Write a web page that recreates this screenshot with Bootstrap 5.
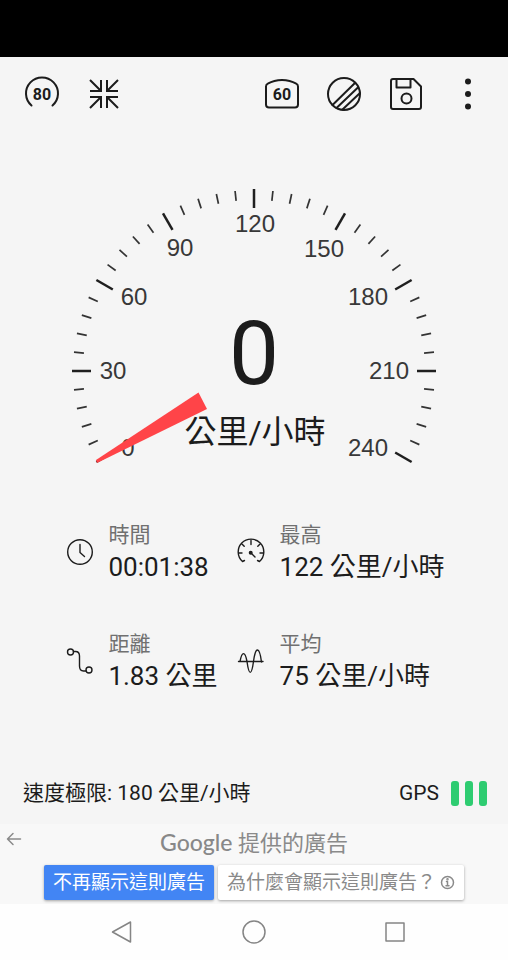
<!DOCTYPE html>
<html lang="zh-Hant">
<head>
<meta charset="utf-8">
<meta name="viewport" content="width=device-width, initial-scale=1">
<title>GPS 速度表</title>
<link href="https://cdn.jsdelivr.net/npm/bootstrap@5.3.0/dist/css/bootstrap.min.css" rel="stylesheet">
<style>
  body { background: #f5f5f5; color: #1c1c1c; font-family: Roboto, "Noto Sans CJK TC", sans-serif; }
  svg { display: block; }
  .status-strip { height: 57px; background: #000; }
  .toolbar { height: 73px; padding: 0 9px 0 11px; }
  .tool-btn { width: 62px; height: 62px; color: #1c1c1c; }
  .ico { fill: none; stroke: currentColor; stroke-width: 2; stroke-linecap: round; stroke-linejoin: round; }
  .ico-sharp { stroke-linecap: butt; stroke-linejoin: miter; }
  .ico-thin { stroke-width: 1.5; }
  .ico text { fill: currentColor; stroke: none; font-weight: 700; font-size: 16px; text-anchor: middle; }
  .dial { max-height: 350px; }
  .dial-num { font-family: "Liberation Sans", Arial, sans-serif; font-size: 24px; fill: #383838; text-anchor: middle; }
  .speed { font-size: 89px; text-anchor: middle; fill: #1c1c1c; }
  .unit { font-size: 32px; text-anchor: middle; fill: #1c1c1c; }
  .stats { display: grid; grid-template-columns: auto auto; justify-content: center; gap: 45px 19px; padding: 40px 0 0 2px; }
  .stat { gap: 15px; }
  .stat .ico { stroke-width: 1.4; }
  .stat dt { font-size: 21px; line-height: 30px; font-weight: 400; color: #707070; }
  .stat dd { font-size: 26px; line-height: 34px; }
  .limit-row { padding: 17px 21px 15px 23px; font-size: 21px; line-height: 32px; }
  .signal { gap: 6px; }
  .signal i { width: 8px; height: 25px; border-radius: 3px; background: #2ecc71; }
  .ad { background: #f8f8f8; height: 80px; padding-top: 3px; color: #8a8a8a; }
  .ad-back { width: 27px; height: 24px; color: #8a8a8a; }
  .ad-title { font-size: 22px; line-height: 30px; }
  .ad-brand { font-family: Lato, sans-serif; font-size: 23px; font-weight: 500; color: #888; }
  .ad-actions { gap: 4px; padding-top: 6px; }
  .ad-btn { height: 35px; padding: 0 9px; font-size: 19px; line-height: 35px; border: 0; border-radius: 2px; box-shadow: 0 1px 3px rgba(0,0,0,.35); white-space: nowrap; }
  .ad-hide { background: #4285f4; color: #fff; }
  .ad-why { background: #fff; color: #8a8a8a; }
  .sysnav { height: 56px; background: #fefefe; gap: 89px; }
  .sysnav .btn { width: 48px; height: 48px; color: #858585; }
</style>
<script src="https://cdn.jsdelivr.net/npm/bootstrap@5.3.0/dist/js/bootstrap.bundle.min.js"></script>
</head>
<body>
<div class="d-flex flex-column min-vh-100">
  <div class="status-strip"></div>

  <header class="toolbar d-flex align-items-center">
    <button type="button" class="tool-btn btn p-0 border-0 d-flex align-items-center justify-content-center" aria-label="速限 80">
      <svg class="ico" width="36" height="36" viewBox="0 0 36 36"><path d="M7.500 29.500A16 16 0 1 1 28.500 29.500"/><text x="18" y="23.500">80</text></svg>
    </button>
    <button type="button" class="tool-btn btn p-0 border-0 d-flex align-items-center justify-content-center" aria-label="縮小">
      <svg class="ico ico-sharp" width="36" height="36" viewBox="0 0 36 36"><path d="M4 15h11V4M15 15 4 4M32 15H21V4M21 15 32 4M4 21h11v11M15 21 4 32M32 21H21v11M21 21l11 11"/></svg>
    </button>
    <button type="button" class="tool-btn btn p-0 border-0 d-flex align-items-center justify-content-center ms-auto" aria-label="速限 60">
      <svg class="ico" width="36" height="36" viewBox="0 0 36 36"><path d="M2 10.500Q2 8.500 3.800 7.700 10 4 18 4t14.200 3.700Q34 8.500 34 10.500V28.500Q34 31.500 31 31.500H5Q2 31.500 2 28.500Z"/><text x="18" y="24">60</text></svg>
    </button>
    <button type="button" class="tool-btn btn p-0 border-0 d-flex align-items-center justify-content-center" aria-label="主題">
      <svg class="ico" width="36" height="36" viewBox="0 0 36 36"><circle cx="18" cy="18" r="16"/><path d="M6.500 29 29.200 6.800M10.500 32 32.200 11.200M16.500 33.500 34 17"/></svg>
    </button>
    <button type="button" class="tool-btn btn p-0 border-0 d-flex align-items-center justify-content-center" aria-label="儲存">
      <svg class="ico" width="36" height="36" viewBox="0 0 36 36"><path d="M5 3H25.500L33 10.500V31Q33 33 31 33H5Q3 33 3 31V5Q3 3 5 3ZM8.500 3v8.500h14V3"/><circle cx="18.500" cy="22.500" r="5"/></svg>
    </button>
    <button type="button" class="tool-btn btn p-0 border-0 d-flex align-items-center justify-content-center" aria-label="更多">
      <svg width="36" height="36" viewBox="0 0 36 36" fill="currentColor"><circle cx="18" cy="5.500" r="3"/><circle cx="18" cy="18" r="3"/><circle cx="18" cy="30.500" r="3"/></svg>
    </button>
  </header>

  <main>
    <svg class="dial w-100" viewBox="-254 -241 508 350" role="img" aria-label="時速 0 公里">
      <defs>
        <path id="major" d="M0-182v19" stroke="#1f1f1f" stroke-width="2.500"/>
        <g id="sector">
          <use href="#major"/>
          <g stroke="#333" stroke-width="1.700">
            <path d="M0-181v10" transform="rotate(6)"/>
            <path d="M0-181v10" transform="rotate(12)"/>
            <path d="M0-181v10" transform="rotate(18)"/>
            <path d="M0-181v10" transform="rotate(24)"/>
          </g>
        </g>
      </defs>
      <use href="#sector" transform="rotate(-120)"/>
      <use href="#sector" transform="rotate(-90)"/>
      <use href="#sector" transform="rotate(-60)"/>
      <use href="#sector" transform="rotate(-30)"/>
      <use href="#sector"/>
      <use href="#sector" transform="rotate(30)"/>
      <use href="#sector" transform="rotate(60)"/>
      <use href="#sector" transform="rotate(90)"/>
      <use href="#major" transform="rotate(120)"/>
      <g class="dial-num">
        <text x="-126" y="85">0</text>
        <text x="-141" y="8">30</text>
        <text x="-120" y="-66">60</text>
        <text x="-74" y="-115">90</text>
        <text x="1" y="-139">120</text>
        <text x="70" y="-114">150</text>
        <text x="114" y="-66">180</text>
        <text x="135" y="8">210</text>
        <text x="114" y="85">240</text>
      </g>
      <text class="speed" x="0" y="13">0</text>
      <text class="unit" x="1" y="72">公里/小時</text>
      <path d="M-158 89-55.500 21.500-47 38-157 92Z" fill="#ff4448"/>
    </svg>

    <dl class="stats mb-0">
      <div class="stat d-flex align-items-center">
        <svg class="ico" width="28" height="28" viewBox="0 0 28 28"><circle cx="15" cy="14" r="12.300"/><path d="M15 6.500V14.500l4.500 4"/></svg>
        <div><dt>時間</dt><dd class="mb-0">00:01:38</dd></div>
      </div>
      <div class="stat d-flex align-items-center">
        <svg class="ico" width="28" height="28" viewBox="0 0 28 28"><path d="M7.500 22.500 5.500 23.500A12.800 12.800 0 1 1 22.500 23.500L20.500 22.500M14 2.500v4M1.500 15h3.500M26.500 15h-3.500M5.200 6.200l2 2M22.800 6.200l-2 2M14 15l4 4"/><circle cx="13.700" cy="14.700" r="1.300" fill="currentColor"/></svg>
        <div><dt>最高</dt><dd class="mb-0">122 公里/小時</dd></div>
      </div>
      <div class="stat d-flex align-items-center">
        <svg class="ico" width="28" height="28" viewBox="0 0 28 28"><circle cx="5.500" cy="5" r="3"/><circle cx="24" cy="23" r="3"/><path d="M8.500 4.500h2Q14.500 4.500 14.500 9V19Q14.500 24 18.500 24h2.500"/></svg>
        <div><dt>距離</dt><dd class="mb-0">1.83 公里</dd></div>
      </div>
      <div class="stat d-flex align-items-center">
        <svg class="ico" width="28" height="28" viewBox="0 0 28 28"><path d="M1.500 14.500h24.500M3 14.500C5 4 8 4 10 14.500 12 29 14.500 29 16.500 14.500 18.500-1 22.500-1 24.500 15"/></svg>
        <div><dt>平均</dt><dd class="mb-0">75 公里/小時</dd></div>
      </div>
    </dl>
  </main>

  <section class="limit-row d-flex align-items-center justify-content-between mt-auto">
    <span>速度極限: 180 公里/小時</span>
    <span class="d-flex align-items-center">
      <span class="me-2 pe-1">GPS</span>
      <span class="signal d-flex"><i></i><i></i><i></i></span>
    </span>
  </section>

  <section class="ad">
    <div class="d-flex">
      <button type="button" class="ad-back btn p-0 border-0 d-flex align-items-center justify-content-center" aria-label="返回">
        <svg class="ico ico-thin" width="16" height="16" viewBox="0 0 16 16"><path d="M14.500 8H1.500M7 2.500 1.500 8 7 13.500"/></svg>
      </button>
      <div class="ad-title flex-fill text-center"><span class="ad-brand">Google</span> 提供的廣告</div>
      <span class="ad-back"></span>
    </div>
    <div class="ad-actions d-flex justify-content-center">
      <button type="button" class="ad-btn ad-hide">不再顯示這則廣告</button>
      <button type="button" class="ad-btn ad-why d-flex align-items-center">為什麼會顯示這則廣告？
        <svg class="ico ico-thin ms-1" width="15" height="15" viewBox="0 0 15 15"><circle cx="7.500" cy="7.500" r="6"/><path d="M6.500 6.500h1v4M6 10.800h3"/><circle cx="7.500" cy="4.200" r=".5"/></svg>
      </button>
    </div>
  </section>

  <nav class="sysnav d-flex align-items-center justify-content-center">
    <button type="button" class="btn p-0 border-0 d-flex align-items-center justify-content-center" aria-label="返回">
      <svg class="ico ico-thin" width="36" height="28" viewBox="0 0 36 28"><path d="M31.500 4V24L13.500 14Z"/></svg>
    </button>
    <button type="button" class="btn p-0 border-0 d-flex align-items-center justify-content-center" aria-label="首頁">
      <svg class="ico ico-thin" width="36" height="28" viewBox="0 0 36 28"><circle cx="18" cy="14" r="11"/></svg>
    </button>
    <button type="button" class="btn p-0 border-0 d-flex align-items-center justify-content-center" aria-label="最近使用">
      <svg class="ico ico-thin" width="36" height="28" viewBox="0 0 36 28"><rect x="13" y="5" width="18" height="18"/></svg>
    </button>
  </nav>
</div>
</body>
</html>
